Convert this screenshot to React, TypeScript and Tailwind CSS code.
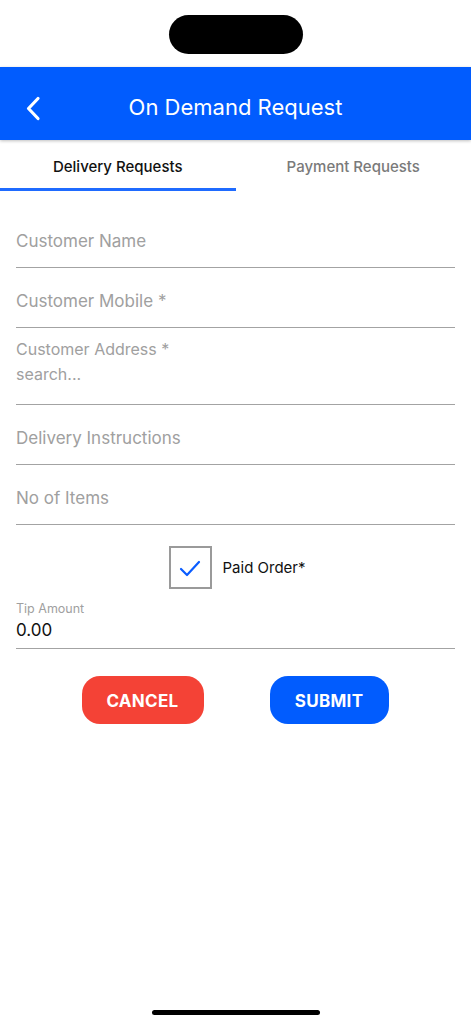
import { useState } from 'react';

// On Demand Request — форма заявки на доставку
function Field({ label }: { label: string }) {
  return (
    <div className="h-[60px] flex items-end pb-[15px] border-b border-[#a3a3a3]">
      <span className="text-[17px] leading-[22px] text-[#a0a0a0]">{label}</span>
    </div>
  );
}

export default function App() {
  const [tab, setTab] = useState<'delivery' | 'payment'>('delivery');
  const [paid, setPaid] = useState(true);

  return (
    <div className="w-[471px] h-[1024px] bg-white relative overflow-hidden" style={{ fontFamily: 'Inter, "Noto Sans", sans-serif' }}>
      {/* status area */}
      <div className="h-[67px] flex justify-center pt-[15px]">
        <div className="w-[134px] h-[39px] rounded-full bg-black" />
      </div>

      {/* header */}
      <div className="h-[73px] bg-[#015cfe] flex items-center relative shadow-[0_1px_3px_rgba(0,0,0,0.25)]">
        <button className="absolute left-[22px] top-[28px] w-[22px] h-[26px] flex items-center justify-center">
          <svg width="16" height="25" viewBox="0 0 16 25" fill="none">
            <polyline points="13,2.5 3.5,12.5 13,22.5" stroke="white" strokeWidth="3.2" strokeLinecap="round" strokeLinejoin="round" />
          </svg>
        </button>
        <h1 className="w-full text-center text-white text-[22px] leading-[28px] pt-[6px]">On Demand Request</h1>
      </div>

      {/* tabs */}
      <div className="h-[52px] flex">
        <button onClick={() => setTab('delivery')} className="w-1/2 relative flex items-center justify-center pt-[2px]">
          <span className={`text-[15px] font-medium ${tab === 'delivery' ? 'text-[#111]' : 'text-[#7a7a7a]'}`}>Delivery Requests</span>
          {tab === 'delivery' && <div className="absolute left-0 right-0 bottom-[1px] h-[3px] bg-[#1f6bff]" />}
        </button>
        <button onClick={() => setTab('payment')} className="w-1/2 relative flex items-center justify-center pt-[2px]">
          <span className={`text-[15px] font-medium ${tab === 'payment' ? 'text-[#111]' : 'text-[#7a7a7a]'}`}>Payment Requests</span>
          {tab === 'payment' && <div className="absolute left-0 right-0 bottom-[1px] h-[3px] bg-[#1f6bff]" />}
        </button>
      </div>

      {/* form */}
      <div className="px-4 pt-[16px]">
        <Field label="Customer Name" />
        <Field label="Customer Mobile *" />
        <div className="h-[77px] pt-[10px] border-b border-[#a3a3a3] flex flex-col gap-[3px]">
          <span className="text-[16px] leading-[22px] text-[#a0a0a0]">Customer Address *</span>
          <span className="text-[16px] leading-[22px] text-[#a0a0a0]">search...</span>
        </div>
        <Field label="Delivery Instructions" />
        <Field label="No of Items" />

        <div className="flex items-center justify-center mt-[21px] pl-[3px]">
          <button onClick={() => setPaid(!paid)} className="w-[43px] h-[43px] border-2 border-[#9a9a9a] flex items-center justify-center">
            {paid && (
              <svg width="22" height="18" viewBox="0 0 22 18" fill="none">
                <polyline points="2,10 8,16 20,3" stroke="#0a5cff" strokeWidth="2.2" strokeLinecap="round" strokeLinejoin="round" />
              </svg>
            )}
          </button>
          <span className="ml-[11px] text-[15px] text-[#111] pt-[1px]">Paid Order*</span>
        </div>

        <div className="mt-[12px] border-b border-[#a3a3a3] pb-[6px]">
          <div className="text-[12.5px] leading-[16px] text-[#a0a0a0]">Tip Amount</div>
          <div className="text-[17px] leading-[24px] text-[#111] mt-[1px]">0.00</div>
        </div>

        <div className="flex justify-center gap-[66px] mt-[27px] pr-[1px]">
          <button className="w-[122px] h-[48px] rounded-[18px] bg-[#f44236] text-white text-[17px] font-bold tracking-[0.3px] pt-[3px]">CANCEL</button>
          <button className="w-[119px] h-[48px] rounded-[18px] bg-[#015cfe] text-white text-[17px] font-bold tracking-[0.3px] pt-[3px]">SUBMIT</button>
        </div>
      </div>

      {/* home indicator */}
      <div className="absolute left-[152px] bottom-[9px] w-[168px] h-[5px] rounded-full bg-black" />
    </div>
  );
}
